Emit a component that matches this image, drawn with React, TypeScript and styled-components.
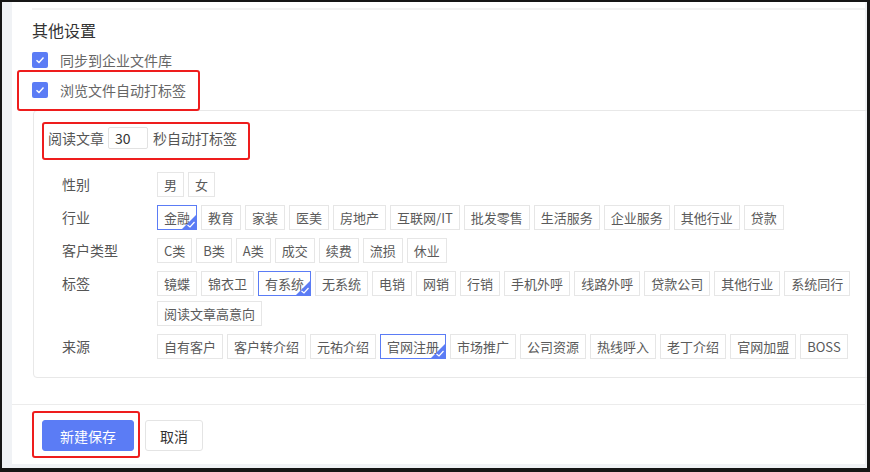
import styled, { createGlobalStyle } from 'styled-components';

const GlobalStyle = createGlobalStyle`
  body {
    margin: 0;
    font-family: "Noto Sans CJK SC", "Noto Sans", sans-serif;
  }
  * { box-sizing: border-box; }
`;

const Frame = styled.div`
  width: 870px;
  height: 472px;
  border-style: solid;
  border-color: #161616;
  border-width: 2px 3px 4px 2px;
  background: #f0f2f5;
  padding: 0 2px 4px 10px;
  overflow: hidden;
`;

const Card = styled.div`
  background: #fff;
  height: 100%;
  display: flex;
  flex-direction: column;
`;

const TopRule = styled.div`
  margin: 6px 0 0 20px;
  height: 2px;
  background: #f2f2f2;
`;

const Section = styled.div`
  padding-left: 20px;
`;

const Title = styled.div`
  margin-top: 8px;
  font-size: 16px;
  line-height: 24px;
  color: #333;
`;

const Marked = styled.div<{ $inset: string }>`
  position: relative;
  display: inline-flex;
  align-items: center;
  &::after {
    content: '';
    position: absolute;
    inset: ${(p) => p.$inset};
    border: 2px solid #ee1d1d;
    border-radius: 3px;
    pointer-events: none;
  }
`;

const CheckRow = styled.div`
  display: flex;
  align-items: center;
  height: 30px;
  gap: 12px;
  font-size: 14px;
  color: #666;
`;

const CheckList = styled.div`
  margin-top: 3px;
  display: flex;
  flex-direction: column;
`;

const Box = styled.span`
  width: 16px;
  height: 16px;
  border-radius: 2px;
  background: #5b7cf5;
  display: inline-flex;
  align-items: center;
  justify-content: center;
`;

const Panel = styled.div`
  margin: 5px -20px 0 1px;
  border: 1px solid #e8e8e8;
  border-radius: 4px;
  padding: 12px 0 18px 14px;
`;

const ReadRow = styled.div`
  display: flex;
  align-items: center;
  height: 30px;
  font-size: 14px;
  color: #555;
`;

const NumInput = styled.div`
  width: 40px;
  height: 22px;
  margin: 0 5px 0 4px;
  border: 1px solid #e2e2e2;
  border-radius: 2px;
  padding-left: 6px;
  font-size: 14px;
  line-height: 20px;
  color: #333;
`;

const Groups = styled.div`
  margin-top: 19px;
  display: flex;
  flex-direction: column;
  gap: 8px;
`;

const Group = styled.div`
  display: flex;
  align-items: flex-start;
`;

const GroupLabel = styled.div`
  width: 109px;
  padding-left: 14px;
  flex-shrink: 0;
  font-size: 14px;
  line-height: 25px;
  color: #555;
`;

const Tags = styled.div`
  display: flex;
  flex-wrap: wrap;
  gap: 5px 4px;
  max-width: 700px;
`;

const Tag = styled.span<{ $on?: boolean }>`
  position: relative;
  height: 25px;
  padding: 0 6px;
  border: 1px solid ${(p) => (p.$on ? '#5b7cf5' : '#e6e6e6')};
  font-size: 13px;
  line-height: 23px;
  color: #5a5a5a;
  white-space: nowrap;
  overflow: hidden;
`;

const Corner = styled.svg`
  position: absolute;
  right: 0;
  bottom: 0;
`;

const Divider = styled.div`
  margin-top: 26px;
  height: 1px;
  background: #ececec;
`;

const Actions = styled.div`
  display: flex;
  align-items: center;
  gap: 11px;
  margin: 15px 0 0 30px;
`;

const Button = styled.button<{ $primary?: boolean }>`
  height: 31px;
  padding: 0 ${(p) => (p.$primary ? '17px' : '14px')};
  border-radius: 3px;
  font-family: inherit;
  font-size: 14px;
  border: 1px solid ${(p) => (p.$primary ? '#5b7cf5' : '#e4e4e4')};
  background: ${(p) => (p.$primary ? '#5b7cf5' : '#fff')};
  color: ${(p) => (p.$primary ? '#fff' : '#333')};
`;

const Tick = () => (
  <svg width="12" height="12" viewBox="0 0 12 12">
    <polyline points="2.5,6.2 5,8.5 9.5,3.5" fill="none" stroke="#fff" strokeWidth="1.4" />
  </svg>
);

const groups: { label: string; tags: string[]; on?: string }[] = [
  { label: '性别', tags: ['男', '女'] },
  {
    label: '行业',
    tags: ['金融', '教育', '家装', '医美', '房地产', '互联网/IT', '批发零售', '生活服务', '企业服务', '其他行业', '贷款'],
    on: '金融',
  },
  { label: '客户类型', tags: ['C类', 'B类', 'A类', '成交', '续费', '流损', '休业'] },
  {
    label: '标签',
    tags: ['镜蝶', '锦衣卫', '有系统', '无系统', '电销', '网销', '行销', '手机外呼', '线路外呼', '贷款公司', '其他行业', '系统同行', '阅读文章高意向'],
    on: '有系统',
  },
  {
    label: '来源',
    tags: ['自有客户', '客户转介绍', '元祐介绍', '官网注册', '市场推广', '公司资源', '热线呼入', '老丁介绍', '官网加盟', 'BOSS'],
    on: '官网注册',
  },
];

export default function App() {
  return (
    <>
      <GlobalStyle />
      <Frame>
        <Card>
          <TopRule />
          <Section>
            <Title>其他设置</Title>
            <CheckList>
              <CheckRow>
                <Box><Tick /></Box>
                同步到企业文件库
              </CheckRow>
              <div>
                <Marked $inset="-5px -14px -6px -15px">
                  <CheckRow>
                    <Box><Tick /></Box>
                    浏览文件自动打标签
                  </CheckRow>
                </Marked>
              </div>
            </CheckList>
            <Panel>
              <Marked $inset="-1px -13px -7px -6px">
                <ReadRow>
                  阅读文章
                  <NumInput>30</NumInput>
                  秒自动打标签
                </ReadRow>
              </Marked>
              <Groups>
                {groups.map((g) => (
                  <Group key={g.label}>
                    <GroupLabel>{g.label}</GroupLabel>
                    <Tags>
                      {g.tags.map((t) => (
                        <Tag key={t} $on={t === g.on}>
                          {t}
                          {t === g.on && (
                            <Corner width="14" height="14" viewBox="0 0 14 14">
                              <polygon points="14,0 14,14 0,14" fill="#5b7cf5" />
                              <polyline points="5.5,10 8,12 12.5,7" fill="none" stroke="#fff" strokeWidth="1.2" />
                            </Corner>
                          )}
                        </Tag>
                      ))}
                    </Tags>
                  </Group>
                ))}
              </Groups>
            </Panel>
          </Section>
          <Divider />
          <Actions>
            <Marked $inset="-9px -6px -7px -10px">
              <Button $primary>新建保存</Button>
            </Marked>
            <Button>取消</Button>
          </Actions>
        </Card>
      </Frame>
    </>
  );
}
